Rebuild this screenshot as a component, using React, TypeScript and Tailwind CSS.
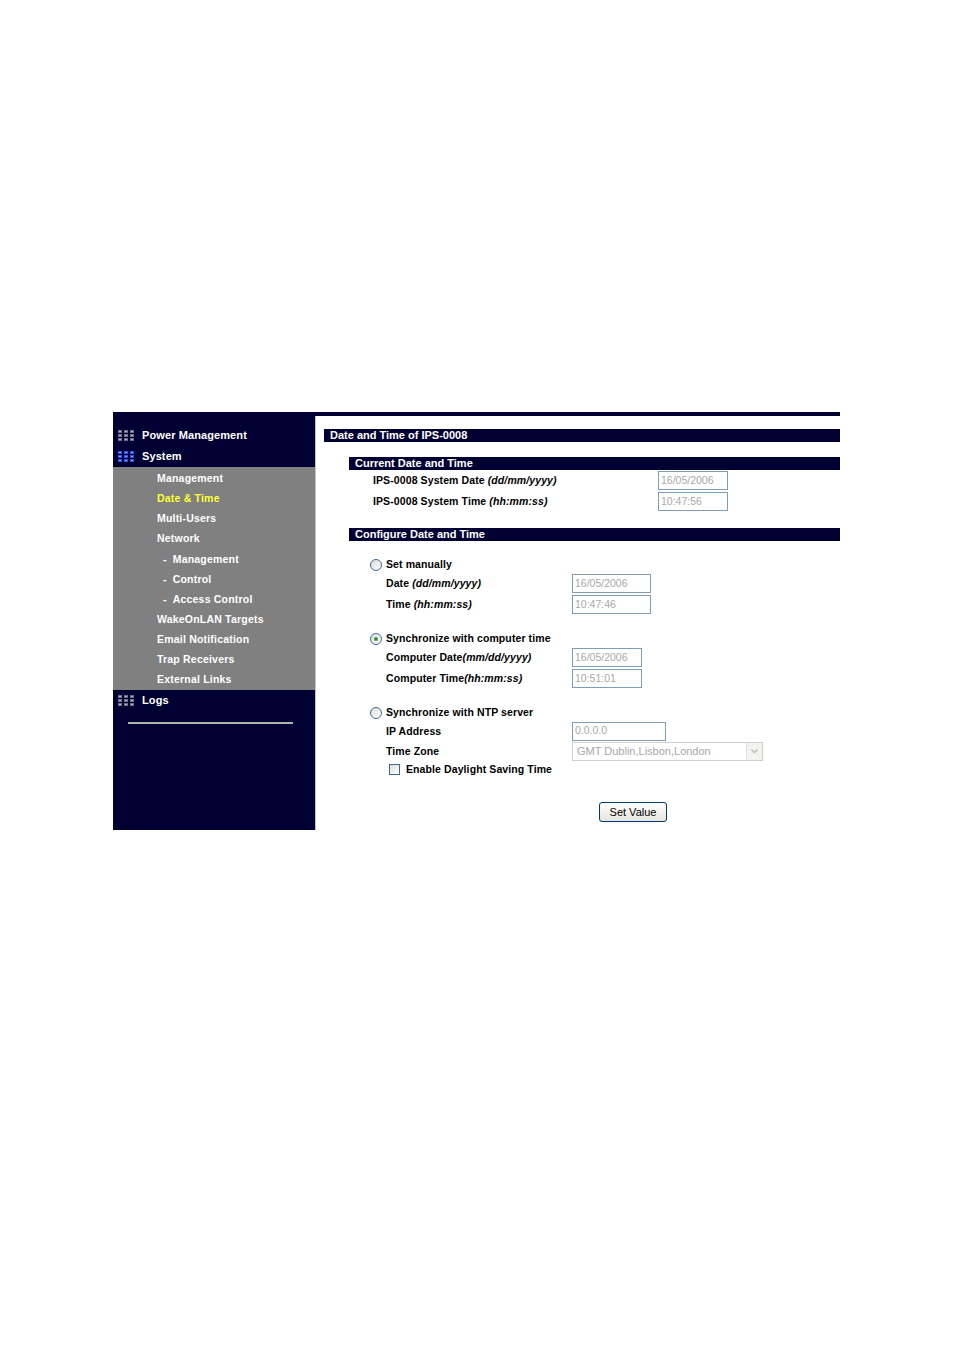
import React from 'react';

const NAVY = 'bg-[#000033]';

function Dots({ blue }: { blue?: boolean }) {
  const outer = blue ? '#2a52e8' : '#6c6c84';
  const inner = blue ? '#7fa0ff' : '#b4b4c4';
  const xs = [0, 6, 12];
  const ys = [0, 4, 8];
  return (
    <svg width="16" height="11" viewBox="0 0 16 11" className="shrink-0">
      {ys.map((y) =>
        xs.map((x) => (
          <g key={`${x}-${y}`}>
            <rect x={x} y={y} width="4" height="3" fill={outer} />
            <rect x={x + 1} y={y + 1} width="2" height="1" fill={inner} />
          </g>
        ))
      )}
    </svg>
  );
}

function NavHead({ label, blue }: { label: string; blue?: boolean }) {
  return (
    <div className="flex h-[21px] items-center pl-[5px] gap-[8px]">
      <Dots blue={blue} />
      <span className="text-[11px] font-bold text-white tracking-[0.1px]">{label}</span>
    </div>
  );
}

const subItems: { label: string; sub?: boolean; active?: boolean }[] = [
  { label: 'Management' },
  { label: 'Date & Time', active: true },
  { label: 'Multi-Users' },
  { label: 'Network' },
  { label: 'Management', sub: true },
  { label: 'Control', sub: true },
  { label: 'Access Control', sub: true },
  { label: 'WakeOnLAN Targets' },
  { label: 'Email Notification' },
  { label: 'Trap Receivers' },
  { label: 'External Links' },
];

function Bar({ children, className }: { children: React.ReactNode; className?: string }) {
  return (
    <div className={`${NAVY} h-[13px] flex items-center text-white font-bold text-[11px] leading-none ${className ?? ''}`}>
      {children}
    </div>
  );
}

function Field({ value, w }: { value: string; w: string }) {
  return (
    <div className={`${w} h-[19px] border border-[#7f9db9] bg-white flex items-center pl-[2px] text-[10.5px] text-[#a8a8a8]`}>
      {value}
    </div>
  );
}

function Radio({ checked }: { checked?: boolean }) {
  return (
    <div className="w-[12px] h-[12px] rounded-full border border-[#3d6a95] bg-gradient-to-br from-[#dcdcd7] to-white flex items-center justify-center shrink-0">
      {checked && <div className="w-[4px] h-[4px] rounded-full bg-[#3f8f3f]" />}
    </div>
  );
}

function Label({ text, em }: { text: string; em?: string }) {
  return (
    <span className="text-[10.5px] font-bold text-black tracking-[0.1px] leading-none">
      {text}
      {em && <i>{em}</i>}
    </span>
  );
}

export default function App() {
  return (
    <div className="min-h-[1355px] bg-white font-['Liberation_Sans',Arial,sans-serif]">
      <div className="pt-[412px] pl-[113px]">
        <div className="flex w-[727px]">
          <aside className={`w-[202px] h-[418px] ${NAVY} pt-[13px] shrink-0`}>
            <NavHead label="Power Management" />
            <NavHead label="System" blue />
            <ul className="bg-[#808080] pt-[2px]">
              {subItems.map((it, i) => (
                <li
                  key={i}
                  className={`h-[20.1px] flex items-center text-[10.5px] font-bold tracking-[0.2px] ${
                    it.sub ? 'pl-[50px]' : 'pl-[44px]'
                  } ${it.active ? 'text-[#ffff33]' : 'text-white'}`}
                >
                  {it.sub && <span className="mr-[6px]">-</span>}
                  {it.label}
                </li>
              ))}
            </ul>
            <NavHead label="Logs" />
            <div className="ml-[15px] mt-[11px] w-[165px] h-[2px] bg-[#b4b0ac]" />
          </aside>

          <main className="flex-1 flex flex-col">
            <div className={`h-[4px] ${NAVY}`} />
            <div className="flex-1 border-l border-l-[#c4c4d6]">
              <Bar className="mt-[13px] ml-[8px] pl-[6px]">Date and Time of IPS-0008</Bar>

              {/* current date and time */}
              <div className="ml-[33px] mt-[15px]">
                <Bar className="pl-[6px]">Current Date and Time</Bar>
                <div className="pl-[24px]">
                  <div className="flex h-[21px] items-center">
                    <div className="w-[285px] flex items-center">
                      <Label text="IPS-0008 System Date " em="(dd/mm/yyyy)" />
                    </div>
                    <Field value="16/05/2006" w="w-[70px]" />
                  </div>
                  <div className="flex h-[21px] items-center">
                    <div className="w-[285px] flex items-center">
                      <Label text="IPS-0008 System Time " em="(hh:mm:ss)" />
                    </div>
                    <Field value="10:47:56" w="w-[70px]" />
                  </div>
                </div>
              </div>

              {/* configure */}
              <div className="ml-[33px] mt-[16px]">
                <Bar className="pl-[6px]">Configure Date and Time</Bar>

                <div className="mt-[15px]">
                  <div className="flex h-[17px] items-center pl-[21px] gap-[4px]">
                    <Radio />
                    <Label text="Set manually" />
                  </div>
                  <div className="flex h-[21px] items-center pl-[37px]">
                    <div className="w-[186px] flex items-center">
                      <Label text="Date " em="(dd/mm/yyyy)" />
                    </div>
                    <Field value="16/05/2006" w="w-[79px]" />
                  </div>
                  <div className="flex h-[21px] items-center pl-[37px]">
                    <div className="w-[186px] flex items-center">
                      <Label text="Time " em="(hh:mm:ss)" />
                    </div>
                    <Field value="10:47:46" w="w-[79px]" />
                  </div>
                </div>

                <div className="mt-[15px]">
                  <div className="flex h-[17px] items-center pl-[21px] gap-[4px]">
                    <Radio checked />
                    <Label text="Synchronize with computer time" />
                  </div>
                  <div className="flex h-[21px] items-center pl-[37px]">
                    <div className="w-[186px] flex items-center">
                      <Label text="Computer Date" em="(mm/dd/yyyy)" />
                    </div>
                    <Field value="16/05/2006" w="w-[70px]" />
                  </div>
                  <div className="flex h-[21px] items-center pl-[37px]">
                    <div className="w-[186px] flex items-center">
                      <Label text="Computer Time" em="(hh:mm:ss)" />
                    </div>
                    <Field value="10:51:01" w="w-[70px]" />
                  </div>
                </div>

                <div className="mt-[15px]">
                  <div className="flex h-[17px] items-center pl-[21px] gap-[4px]">
                    <Radio />
                    <Label text="Synchronize with NTP server" />
                  </div>
                  <div className="flex h-[20px] items-center pl-[37px]">
                    <div className="w-[186px] flex items-center">
                      <Label text="IP Address" />
                    </div>
                    <Field value="0.0.0.0" w="w-[94px]" />
                  </div>
                  <div className="flex h-[20px] items-center pl-[37px]">
                    <div className="w-[186px] flex items-center">
                      <Label text="Time Zone" />
                    </div>
                    <div className="w-[191px] h-[19px] border border-[#d0d0c8] bg-white flex items-center justify-between">
                      <span className="pl-[4px] text-[11px] text-[#a8a8a8]">GMT Dublin,Lisbon,London</span>
                      <div className="w-[16px] h-[17px] bg-[#f2f2ee] border-l border-l-[#e2e2dc] flex items-center justify-center">
                        <svg width="7" height="5" viewBox="0 0 7 5">
                          <path d="M0.5 0.5 L3.5 3.5 L6.5 0.5" fill="none" stroke="#b8b8b8" strokeWidth="1.3" />
                        </svg>
                      </div>
                    </div>
                  </div>
                  <div className="flex h-[17px] items-center pl-[40px] gap-[6px]">
                    <div className="w-[11px] h-[11px] border border-[#3d6a95] bg-gradient-to-br from-[#dcdcd7] to-white shrink-0" />
                    <Label text="Enable Daylight Saving Time" />
                  </div>
                </div>

                <div className="mt-[24px] flex pl-[250px]">
                  <button className="w-[68px] h-[20px] rounded-[3px] border border-[#003c74] bg-gradient-to-b from-white to-[#e6e4dc] text-[11px] text-black leading-none">
                    Set Value
                  </button>
                </div>
              </div>
            </div>
          </main>
        </div>
      </div>
    </div>
  );
}
